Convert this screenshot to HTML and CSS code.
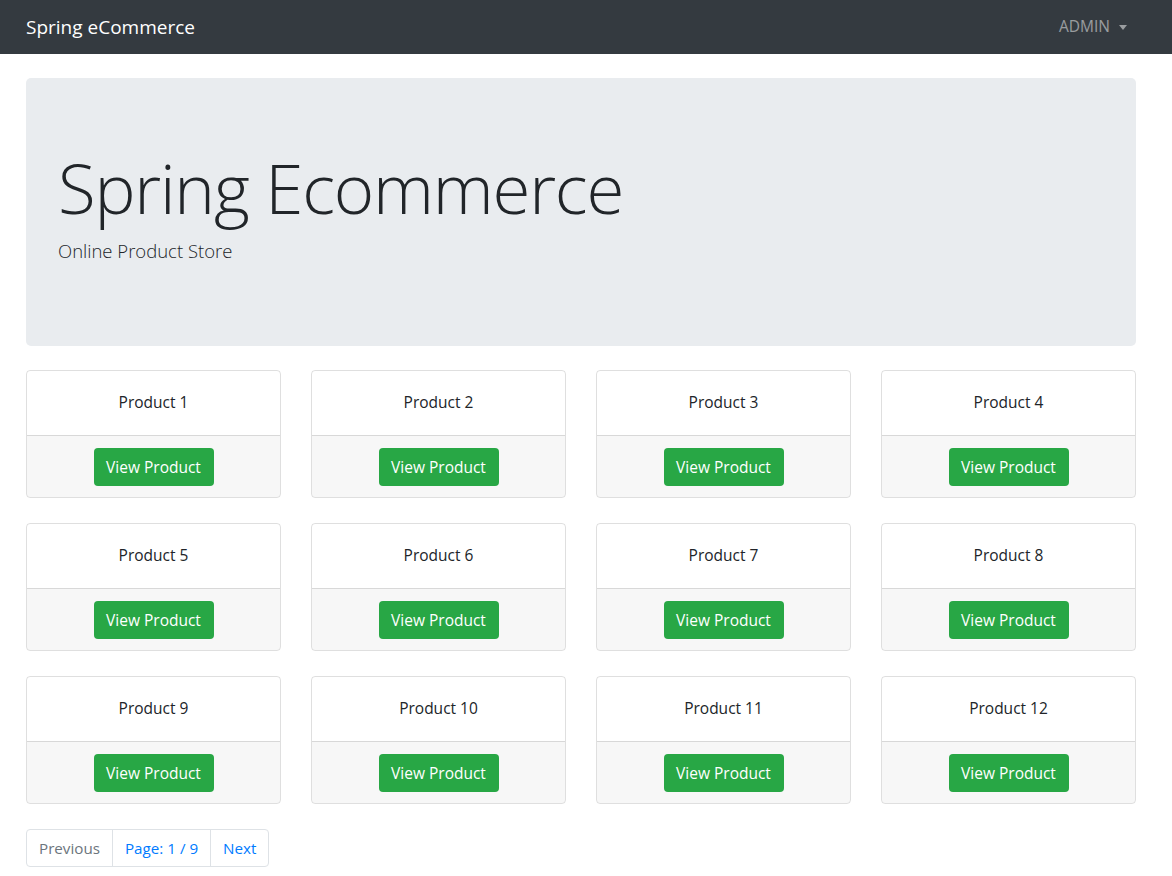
FILE: index.html
```html
<!DOCTYPE html>
<html lang="en">
<head>
<meta charset="utf-8">
<title>Spring eCommerce</title>
<link rel="stylesheet" href="styles.css">
</head>
<body>
<nav class="navbar">
  <a class="brand" href="#">Spring eCommerce</a>
  <a class="nav-link dropdown-toggle" href="#">ADMIN</a>
</nav>
<main class="container">
  <section class="jumbotron">
    <h1 class="display">Spring Ecommerce</h1>
    <p class="lead">Online Product Store</p>
  </section>
  <section class="grid">
    <div class="card"><div class="card-body">Product 1</div><div class="card-footer"><a class="btn" href="#">View Product</a></div></div>
    <div class="card"><div class="card-body">Product 2</div><div class="card-footer"><a class="btn" href="#">View Product</a></div></div>
    <div class="card"><div class="card-body">Product 3</div><div class="card-footer"><a class="btn" href="#">View Product</a></div></div>
    <div class="card"><div class="card-body">Product 4</div><div class="card-footer"><a class="btn" href="#">View Product</a></div></div>
    <div class="card"><div class="card-body">Product 5</div><div class="card-footer"><a class="btn" href="#">View Product</a></div></div>
    <div class="card"><div class="card-body">Product 6</div><div class="card-footer"><a class="btn" href="#">View Product</a></div></div>
    <div class="card"><div class="card-body">Product 7</div><div class="card-footer"><a class="btn" href="#">View Product</a></div></div>
    <div class="card"><div class="card-body">Product 8</div><div class="card-footer"><a class="btn" href="#">View Product</a></div></div>
    <div class="card"><div class="card-body">Product 9</div><div class="card-footer"><a class="btn" href="#">View Product</a></div></div>
    <div class="card"><div class="card-body">Product 10</div><div class="card-footer"><a class="btn" href="#">View Product</a></div></div>
    <div class="card"><div class="card-body">Product 11</div><div class="card-footer"><a class="btn" href="#">View Product</a></div></div>
    <div class="card"><div class="card-body">Product 12</div><div class="card-footer"><a class="btn" href="#">View Product</a></div></div>
  </section>
  <ul class="pagination">
    <li class="page-item disabled"><span class="page-link">Previous</span></li>
    <li class="page-item"><a class="page-link" href="#">Page: 1 / 9</a></li>
    <li class="page-item"><a class="page-link" href="#">Next</a></li>
  </ul>
</main>
</body>
</html>
```
FILE: styles.css
```css
* { box-sizing: border-box; }
html, body { margin: 0; }
body {
  font-family: "Open Sans", "Noto Sans", sans-serif;
  font-size: 16px;
  line-height: 1.5;
  color: #212529;
  background: #fff;
}
a { text-decoration: none; }

.navbar {
  height: 54px;
  background: #343a40;
  display: flex;
  align-items: center;
  justify-content: space-between;
  padding: 0 45px 0 26px;
}
.brand {
  color: #fff;
  font-size: 19px;
  line-height: 30px;
}
.nav-link {
  color: rgba(255,255,255,.5);
  font-size: 15.5px;
  display: flex;
  align-items: center;
}
.dropdown-toggle::after {
  content: "";
  display: inline-block;
  margin-left: 9px;
  border-top: 5px solid;
  border-left: 4.5px solid transparent;
  border-right: 4.5px solid transparent;
}

.container {
  padding: 24px 36px 10px 26px;
}

.jumbotron {
  background: #e9ecef;
  border-radius: 5px;
  height: 268px;
  padding: 68px 32px 0 32px;
}
.display {
  margin: 0;
  font-size: 69px;
  font-weight: 300;
  line-height: 1.2;
  letter-spacing: -1.2px;
}
.lead {
  margin: 7px 0 0;
  font-size: 18.5px;
  font-weight: 300;
  line-height: 30px;
}

.grid {
  margin-top: 24px;
  display: grid;
  grid-template-columns: repeat(4, 1fr);
  column-gap: 30px;
  row-gap: 25px;
}
.card {
  border: 1px solid rgba(0,0,0,.125);
  border-radius: 4px;
  overflow: hidden;
  text-align: center;
}
.card-body {
  height: 64px;
  display: flex;
  align-items: center;
  justify-content: center;
  font-size: 15.5px;
}
.card-footer {
  background: rgba(0,0,0,.03);
  border-top: 1px solid rgba(0,0,0,.125);
  height: 62px;
  display: flex;
  align-items: center;
  justify-content: center;
}
.btn {
  display: inline-block;
  background: #28a745;
  color: #fff;
  border-radius: 4px;
  width: 120px;
  height: 38px;
  line-height: 38px;
  font-size: 15.5px;
}

.pagination {
  list-style: none;
  margin: 25px 0 0;
  padding: 0;
  display: flex;
}
.page-link {
  display: block;
  height: 38px;
  line-height: 36px;
  padding: 0 12px;
  border: 1px solid #dee2e6;
  margin-left: -1px;
  color: #007bff;
  font-size: 15.2px;
}
.page-item:first-child .page-link { margin-left: 0; border-radius: 4px 0 0 4px; }
.page-item:last-child .page-link { border-radius: 0 4px 4px 0; }
.page-item.disabled .page-link { color: #6c757d; }
```
